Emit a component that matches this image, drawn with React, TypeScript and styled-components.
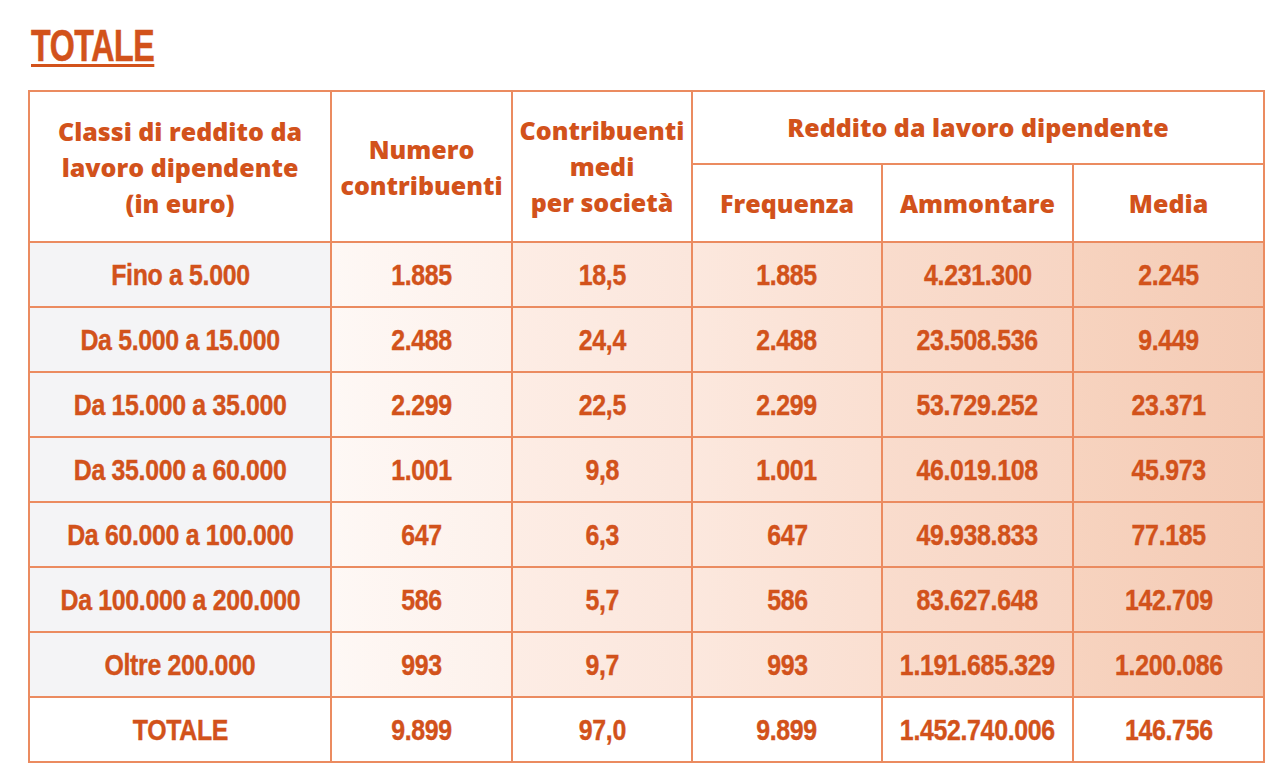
import React from "react";
import styled, { createGlobalStyle } from "styled-components";

const Global = createGlobalStyle`
  html, body { margin: 0; padding: 0; background: #ffffff; }
  body { width: 1280px; height: 783px; overflow: hidden; }
`;

const ORANGE = "#d2521b";
const LINE = "#eb8b60";

const Page = styled.div`
  padding: 22px 0 0 28px;
  box-sizing: border-box;
  width: 1280px;
  height: 783px;
`;

const Title = styled.h1`
  display: inline-block;
  margin: 0 0 21px 3px;
  font-family: "Liberation Sans", Arial, sans-serif;
  font-weight: 700;
  font-size: 44px;
  line-height: 47px;
  letter-spacing: -0.5px;
  color: ${ORANGE};
  -webkit-text-stroke: 0.6px ${ORANGE};
  text-decoration: underline;
  text-decoration-thickness: 3px;
  text-underline-offset: 3px;
  transform: scaleX(0.73);
  transform-origin: left center;
`;

const Table = styled.table`
  border-collapse: collapse;
  table-layout: fixed;
  width: 1235px;
  border: 2px solid ${LINE};
`;

const Head = styled.th<{ $h?: number }>`
  border: 2px solid ${LINE};
  background: #ffffff;
  height: ${(p) => p.$h ?? 72}px;
  padding: 0;
  font-family: "Open Sans", Lato, sans-serif;
  font-weight: 800;
  font-size: 25px;
  line-height: 36px;
  letter-spacing: 0;
  color: ${ORANGE};
  text-align: center;
  vertical-align: middle;
  white-space: nowrap;
`;

const HeadText = styled.div<{ $shift?: number }>`
  transform: translateY(${(p) => p.$shift ?? 0}px);
`;

const Row = styled.tr`
  height: 65px;
`;

const bgs = [
  "#f4f4f6",
  "linear-gradient(90deg, #fef8f5, #fdf1eb)",
  "linear-gradient(90deg, #fdede5, #fbe6dc)",
  "linear-gradient(90deg, #fce8de, #fadfd1)",
  "linear-gradient(90deg, #f9dccd, #f7d5c3)",
  "linear-gradient(90deg, #f7d3bf, #f4cbb5)",
];

const Cell = styled.td<{ $col: number; $total?: boolean }>`
  border: 2px solid ${LINE};
  padding: 0;
  background: ${(p) => (p.$total ? "#ffffff" : bgs[p.$col])};
  text-align: center;
  vertical-align: middle;
  white-space: nowrap;
`;

const Num = styled.span`
  display: inline-block;
  font-family: "Liberation Sans", Arial, sans-serif;
  font-weight: 700;
  font-size: 30px;
  letter-spacing: -0.4px;
  color: ${ORANGE};
  -webkit-text-stroke: 0.4px ${ORANGE};
  transform: scaleX(0.83);
  transform-origin: center;
`;

const rows: string[][] = [
  ["Fino a 5.000", "1.885", "18,5", "1.885", "4.231.300", "2.245"],
  ["Da 5.000 a 15.000", "2.488", "24,4", "2.488", "23.508.536", "9.449"],
  ["Da 15.000 a 35.000", "2.299", "22,5", "2.299", "53.729.252", "23.371"],
  ["Da 35.000 a 60.000", "1.001", "9,8", "1.001", "46.019.108", "45.973"],
  ["Da 60.000 a 100.000", "647", "6,3", "647", "49.938.833", "77.185"],
  ["Da 100.000 a 200.000", "586", "5,7", "586", "83.627.648", "142.709"],
  ["Oltre 200.000", "993", "9,7", "993", "1.191.685.329", "1.200.086"],
];

const total = ["TOTALE", "9.899", "97,0", "9.899", "1.452.740.006", "146.756"];

const widths = [302, 181, 180, 190, 191, 191];

export default function App() {
  return (
    <>
      <Global />
      <Page>
        <Title>TOTALE</Title>
        <Table>
          <colgroup>
            {widths.map((w, i) => (
              <col key={i} style={{ width: w }} />
            ))}
          </colgroup>
          <thead>
            <tr>
              <Head rowSpan={2}>
                Classi di reddito da
                <br />
                lavoro dipendente
                <br />
                (in euro)
              </Head>
              <Head rowSpan={2}>
                <HeadText $shift={0}>
                  Numero
                  <br />
                  contribuenti
                </HeadText>
              </Head>
              <Head rowSpan={2}>
                <HeadText $shift={-1}>
                  Contribuenti
                  <br />
                  medi
                  <br />
                  per società
                </HeadText>
              </Head>
              <Head colSpan={3} $h={71}>
                <HeadText $shift={-1}>Reddito da lavoro dipendente</HeadText>
              </Head>
            </tr>
            <tr>
              <Head $h={76}>Frequenza</Head>
              <Head $h={76}>Ammontare</Head>
              <Head $h={76}>Media</Head>
            </tr>
          </thead>
          <tbody>
            {rows.map((r, i) => (
              <Row key={i}>
                {r.map((v, j) => (
                  <Cell key={j} $col={j}>
                    <Num>{v}</Num>
                  </Cell>
                ))}
              </Row>
            ))}
            <Row>
              {total.map((v, j) => (
                <Cell key={j} $col={j} $total>
                  <Num>{v}</Num>
                </Cell>
              ))}
            </Row>
          </tbody>
        </Table>
      </Page>
    </>
  );
}
